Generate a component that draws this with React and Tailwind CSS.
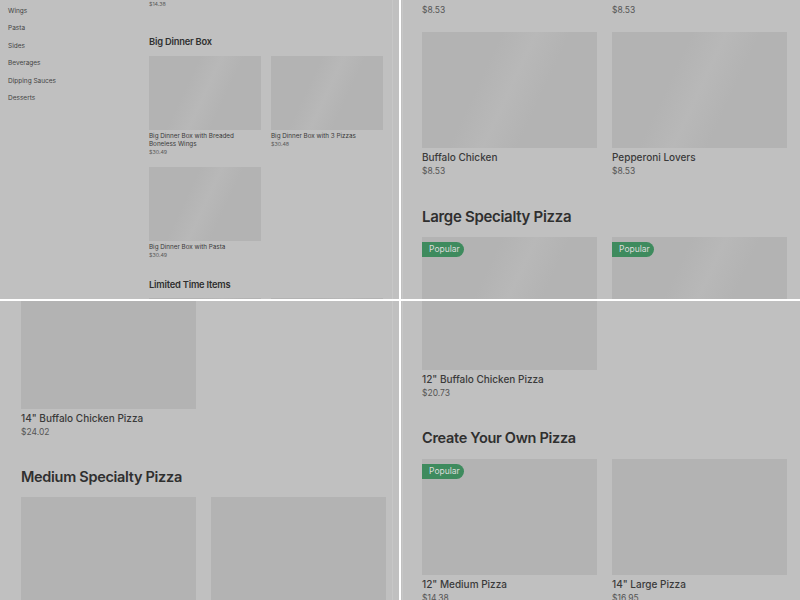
import React from "react";

const shimmer =
    "bg-[linear-gradient(115deg,#b3b3b3_35%,#b8b8b8_50%,#b3b3b3_65%)]";

const sideLinks = ["Wings", "Pasta", "Sides", "Beverages", "Dipping Sauces", "Desserts"];

// small card used in the zoomed-out panel
const SmallCard = ({ title, price }) => (
    <div>
        <div className={`h-[74px] ${shimmer}`}></div>
        <div className="mt-[2px] text-[6.3px] leading-[8px] text-[#3a3a3a]">{title}</div>
        <div className="text-[5.3px] leading-[9px] text-[#5a5a5a]">{price}</div>
    </div>
);

const Badge = () => (
    <div className="absolute left-0 top-[5px] h-[15px] w-[42px] rounded-r-full bg-[#3e8b5e] pl-[7px] text-[8.5px] leading-[15px] text-[#dcdcdc]">
        Popular
    </div>
);

const Card = ({ title, price, popular, shim }) => (
    <div>
        <div className={`relative h-[116px] ${shim ? shimmer : "bg-[#b3b3b3]"}`}>
            {popular && <Badge />}
        </div>
        <div className="mt-[2px] text-[10px] leading-[14px] font-medium text-[#3a3a3a]">{title}</div>
        <div className="text-[8.5px] leading-[14px] text-[#555]">{price}</div>
    </div>
);

const Heading = ({ children, className = "" }) => (
    <h2 className={`text-[14.5px] leading-[20px] font-semibold tracking-[-0.3px] text-[#2f2f2f] ${className}`}>
        {children}
    </h2>
);

const Panel = ({ children, edge }) => (
    <div className="relative overflow-hidden bg-[#c0c0c0] font-['Inter',sans-serif]">
        {children}
        <div className={`absolute top-0 bottom-0 w-px bg-[#c7c7c7] ${edge}`}></div>
    </div>
);

const App = () => {
    return (
        <div className="grid h-[600px] w-[800px] grid-cols-[399px_399px] grid-rows-[299px_299px] gap-[2px] bg-white">
            {/* zoomed out view with sidebar */}
            <Panel edge="left-[392px]">
                <div className="flex">
                    <nav className="w-[149px] shrink-0 pl-[8px] pt-[2.5px]">
                        {sideLinks.map((l) => (
                            <div key={l} className="text-[6.5px] leading-[17.5px] text-[#444]">{l}</div>
                        ))}
                    </nav>
                    <div className="w-[234px]">
                        <div className="mt-[-0.5px] text-[5.3px] leading-[9px] text-[#5a5a5a]">$14.38</div>
                        <h2 className="mt-[27px] text-[9.3px] leading-[12px] font-semibold tracking-[-0.2px] text-[#2f2f2f]">Big Dinner Box</h2>
                        <div className="mt-[8px] grid grid-cols-2 gap-x-[10px] gap-y-[10px]">
                            <SmallCard title="Big Dinner Box with Breaded Boneless Wings" price="$30.49" />
                            <SmallCard title="Big Dinner Box with 3 Pizzas" price="$30.48" />
                            <SmallCard title="Big Dinner Box with Pasta" price="$30.49" />
                        </div>
                        <h2 className="mt-[19px] text-[9.3px] leading-[12px] font-semibold tracking-[-0.2px] text-[#2f2f2f]">Limited Time Items</h2>
                        <div className="mt-[7px] grid grid-cols-2 gap-x-[10px]">
                            <div className={`h-[74px] ${shimmer}`}></div>
                            <div className={`h-[74px] ${shimmer}`}></div>
                        </div>
                    </div>
                </div>
            </Panel>

            <Panel edge="left-[1px]">
                <div className="pl-[21px] pr-[13px]">
                    <div className="mt-[-129px] grid grid-cols-2 gap-x-[15px] gap-y-[15px]">
                        <Card title="Meat Lovers" price="$8.53" shim />
                        <Card title="Cheese Lovers" price="$8.53" shim />
                        <Card title="Buffalo Chicken" price="$8.53" shim />
                        <Card title="Pepperoni Lovers" price="$8.53" shim />
                    </div>
                    <Heading className="mt-[29px] text-[15px]">Large Specialty Pizza</Heading>
                    <div className="mt-[10px] grid grid-cols-2 gap-x-[15px]">
                        <Card title={"12\" Supreme Pizza"} price="$20.73" popular shim />
                        <Card title={"14\" Supreme Pizza"} price="$24.02" popular shim />
                    </div>
                </div>
            </Panel>

            <Panel edge="left-[392px]">
                <div className="pl-[21px] pr-[13px]">
                    <div className="mt-[-8px] grid grid-cols-2 gap-x-[15px]">
                        <Card title={"14\" Buffalo Chicken Pizza"} price="$24.02" />
                    </div>
                    <Heading className="mt-[28px]">Medium Specialty Pizza</Heading>
                    <div className="mt-[10px] grid grid-cols-2 gap-x-[15px]">
                        <Card title={"12\" Pepperoni Pizza"} price="$17.95" />
                        <Card title={"12\" Supreme Pizza"} price="$18.95" />
                    </div>
                </div>
            </Panel>

            <Panel edge="left-[1px]">
                <div className="pl-[21px] pr-[13px]">
                    <div className="mt-[-47px] grid grid-cols-2 gap-x-[15px]">
                        <Card title={"12\" Buffalo Chicken Pizza"} price="$20.73" />
                    </div>
                    <Heading className="mt-[28px]">Create Your Own Pizza</Heading>
                    <div className="mt-[11px] grid grid-cols-2 gap-x-[15px]">
                        <Card title={"12\" Medium Pizza"} price="$14.38" popular />
                        <Card title={"14\" Large Pizza"} price="$16.95" />
                    </div>
                </div>
            </Panel>
        </div>
    );
};

export default App;
